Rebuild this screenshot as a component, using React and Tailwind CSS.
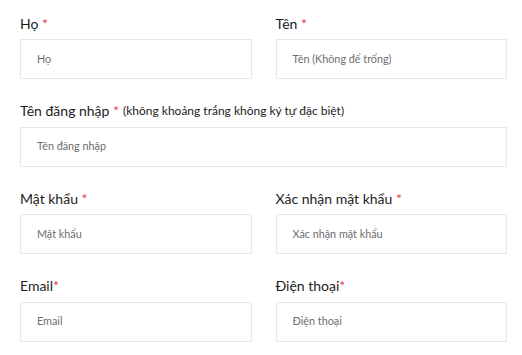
import React from "react";

const font = { fontFamily: '"Lato", "Noto Sans", sans-serif' };

function Field({ label, star = " *", hint, placeholder }) {
  return (
    <div className="flex flex-col">
      <div className="h-[18px] mb-[7px] flex items-center whitespace-nowrap">
        <span className="text-[14px] text-[#1c1c1c]">{label}</span>
        <span className="text-[14px] text-[#e63a4f] whitespace-pre">{star}</span>
        {hint && (
          <span className="ml-[4px] text-[12px] text-[#1c1c1c]">{hint}</span>
        )}
      </div>
      <div className="h-10 border border-[#e8e8e8] bg-white flex items-center pl-4">
        <span className="text-[10.8px] text-[#6e6e6e]">{placeholder}</span>
      </div>
    </div>
  );
}

export default function App() {
  return (
    <div className="w-[522px] h-[355px] bg-white pt-[14px] pl-5 pr-[15px] overflow-hidden" style={font}>
      <div className="flex flex-col gap-[22.5px]">
        <div className="grid grid-cols-2 gap-6">
          <Field label="Họ" placeholder="Họ" />
          <Field label="Tên" placeholder="Tên (Không để trống)" />
        </div>
        <Field
          label="Tên đăng nhập"
          hint="(không khoảng trắng không ký tự đặc biệt)"
          placeholder="Tên đăng nhập"
        />
        <div className="grid grid-cols-2 gap-6">
          <Field label="Mật khẩu" placeholder="Mật khẩu" />
          <Field label="Xác nhận mật khẩu" placeholder="Xác nhận mật khẩu" />
        </div>
        <div className="grid grid-cols-2 gap-6">
          <Field label="Email" star="*" placeholder="Email" />
          <Field label="Điện thoại" star="*" placeholder="Điện thoại" />
        </div>
      </div>
    </div>
  );
}
